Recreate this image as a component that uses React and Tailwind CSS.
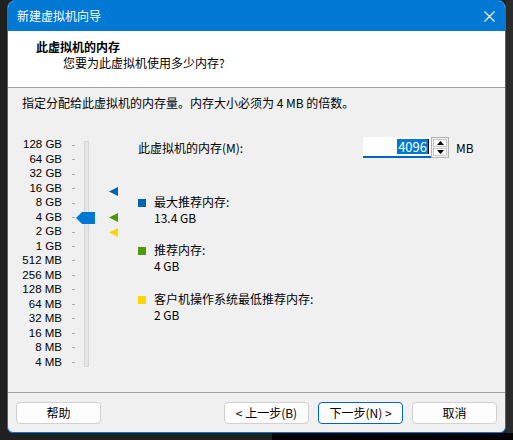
import React from "react";

const labels = [
  "128 GB", "64 GB", "32 GB", "16 GB", "8 GB", "4 GB", "2 GB", "1 GB",
  "512 MB", "256 MB", "128 MB", "64 MB", "32 MB", "16 MB", "8 MB", "4 MB",
];

function Arrow({ color, className }) {
  return (
    <svg className={className} width="9" height="9" viewBox="0 0 9 9">
      <polygon points="0,4.5 9,0 9,9" fill={color} />
    </svg>
  );
}

function Slider() {
  return (
    <div className="relative w-[130px] h-[232px] shrink-0">
      {/* labels + ticks */}
      <div className="flex flex-col font-['Liberation_Sans',sans-serif]">
        {labels.map((l) => (
          <div key={l} className="flex items-center h-[14.47px]">
            <span className="w-[54px] text-right leading-none text-[11.5px]">{l}</span>
            <span className="ml-[10px] w-[3px] h-px bg-[#a8a8a8]" />
          </div>
        ))}
      </div>
      {/* track */}
      <div className="absolute left-[76px] top-[3px] w-[5px] h-[226px] bg-[#e6e6e6] border border-[#d6d6d6]" />
      {/* thumb */}
      <svg className="absolute left-[68px] top-[74px]" width="19" height="12" viewBox="0 0 19 12">
        <polygon points="0,6 6,0 19,0 19,12 6,12" fill="#0078d4" />
      </svg>
      <Arrow color="#0063b1" className="absolute left-[101px] top-[49px]" />
      <Arrow color="#4e9a06" className="absolute left-[101px] top-[75px]" />
      <Arrow color="#ffd700" className="absolute left-[101px] top-[90px]" />
    </div>
  );
}

function Legend({ color, title, value, className }) {
  return (
    <div className={`flex items-start ${className}`}>
      <span className="w-2 h-2 mt-[4.5px] shrink-0" style={{ background: color }} />
      <div className="ml-2 leading-[16px]">
        <div>{title}</div>
        <div>{value}</div>
      </div>
    </div>
  );
}

function Btn({ children, primary }) {
  return (
    <button
      className={`w-[85px] h-[22px] rounded-[4px] bg-[#fdfdfd] text-[12px] leading-none flex items-center justify-center border ${
        primary ? "border-[#0067c0]" : "border-[#d0d0d0]"
      }`}
    >
      {children}
    </button>
  );
}

export default function App() {
  return (
    <div
      className="w-[513px] h-[440px] bg-[#202020] text-[12px] text-black overflow-hidden"
      style={{ fontFamily: '"Noto Sans CJK SC", "Noto Sans", sans-serif' }}
    >
      <div className="flex">
        <div className="w-[7px] shrink-0" />
        <div className="w-[499px] h-[433px] rounded-t-lg rounded-b-[6px] border border-[#0078d4] bg-[#f0f0f0] flex flex-col overflow-hidden">
          {/* title bar */}
          <div className="h-[30px] bg-[#0078d4] flex items-center justify-between pl-[9px] pr-[9px] text-white">
            <span className="leading-none">新建虚拟机向导</span>
            <svg width="11" height="11" viewBox="0 0 11 11" className="mr-[1px]">
              <path d="M0.5 0.5 L10.5 10.5 M10.5 0.5 L0.5 10.5" stroke="white" strokeWidth="1.1" />
            </svg>
          </div>

          {/* header */}
          <div className="h-[57px] bg-white border-b border-[#a0a0a0] pt-[8px]">
            <div className="pl-[28px] font-bold leading-[16px]">此虚拟机的内存</div>
            <div className="pl-[55px] leading-[16px]">您要为此虚拟机使用多少内存?</div>
          </div>

          {/* body */}
          <div className="flex-1 flex flex-col">
            <div className="mt-[7px] pl-[14px] leading-[16px]">
              指定分配给此虚拟机的内存量。内存大小必须为 4 MB 的倍数。
            </div>

            <div className="flex mt-[27px]">
              <Slider />
              <div className="flex-1 flex flex-col">
                <div className="flex items-center h-[21px] -mt-px">
                  <span className="w-[225px] leading-none">此虚拟机的内存(M):</span>
                  <div className="w-[68px] h-[21px] bg-white border-b-2 border-[#0067c0] flex items-center justify-end pr-[2px]">
                    <span className="bg-[#0078d4] text-white text-[13px] leading-[15px] px-px">4096</span>
                    <span className="w-px h-[15px] bg-black" />
                  </div>
                  <div className="w-[18px] h-[21px] border border-[#b4b4b4] bg-[#f0f0f0] flex flex-col p-px gap-px">
                    <div className="flex-1 bg-[#fbfbfb] border border-[#c8c8c8] flex items-center justify-center">
                      <svg width="7" height="4" viewBox="0 0 7 4"><polygon points="3.5,0 7,4 0,4" fill="#000" /></svg>
                    </div>
                    <div className="flex-1 bg-[#fbfbfb] border border-[#c8c8c8] flex items-center justify-center">
                      <svg width="7" height="4" viewBox="0 0 7 4"><polygon points="0,0 7,0 3.5,4" fill="#000" /></svg>
                    </div>
                  </div>
                  <span className="ml-[7px] leading-none">MB</span>
                </div>

                <Legend className="mt-[36px]" color="#0063b1" title="最大推荐内存:" value="13.4 GB" />
                <Legend className="mt-[16px]" color="#4e9a06" title="推荐内存:" value="4 GB" />
                <Legend className="mt-[17px]" color="#ffd700" title="客户机操作系统最低推荐内存:" value="2 GB" />
              </div>
            </div>
          </div>

          {/* footer */}
          <div className="border-t border-[#a0a0a0] pt-[9px] pb-[8px] px-[8px] flex items-center">
            <Btn>帮助</Btn>
            <div className="flex-1" />
            <div className="flex gap-[9px]">
              <Btn>&lt; 上一步(B)</Btn>
              <Btn primary>下一步(N) &gt;</Btn>
              <Btn>取消</Btn>
            </div>
          </div>
        </div>
        <div className="flex-1 bg-[#2b2b2b]" />
      </div>
      <div className="flex h-[7px]">
        <div className="w-[272px] bg-[#202020]" />
        <div className="flex-1 bg-black" />
      </div>
    </div>
  );
}
